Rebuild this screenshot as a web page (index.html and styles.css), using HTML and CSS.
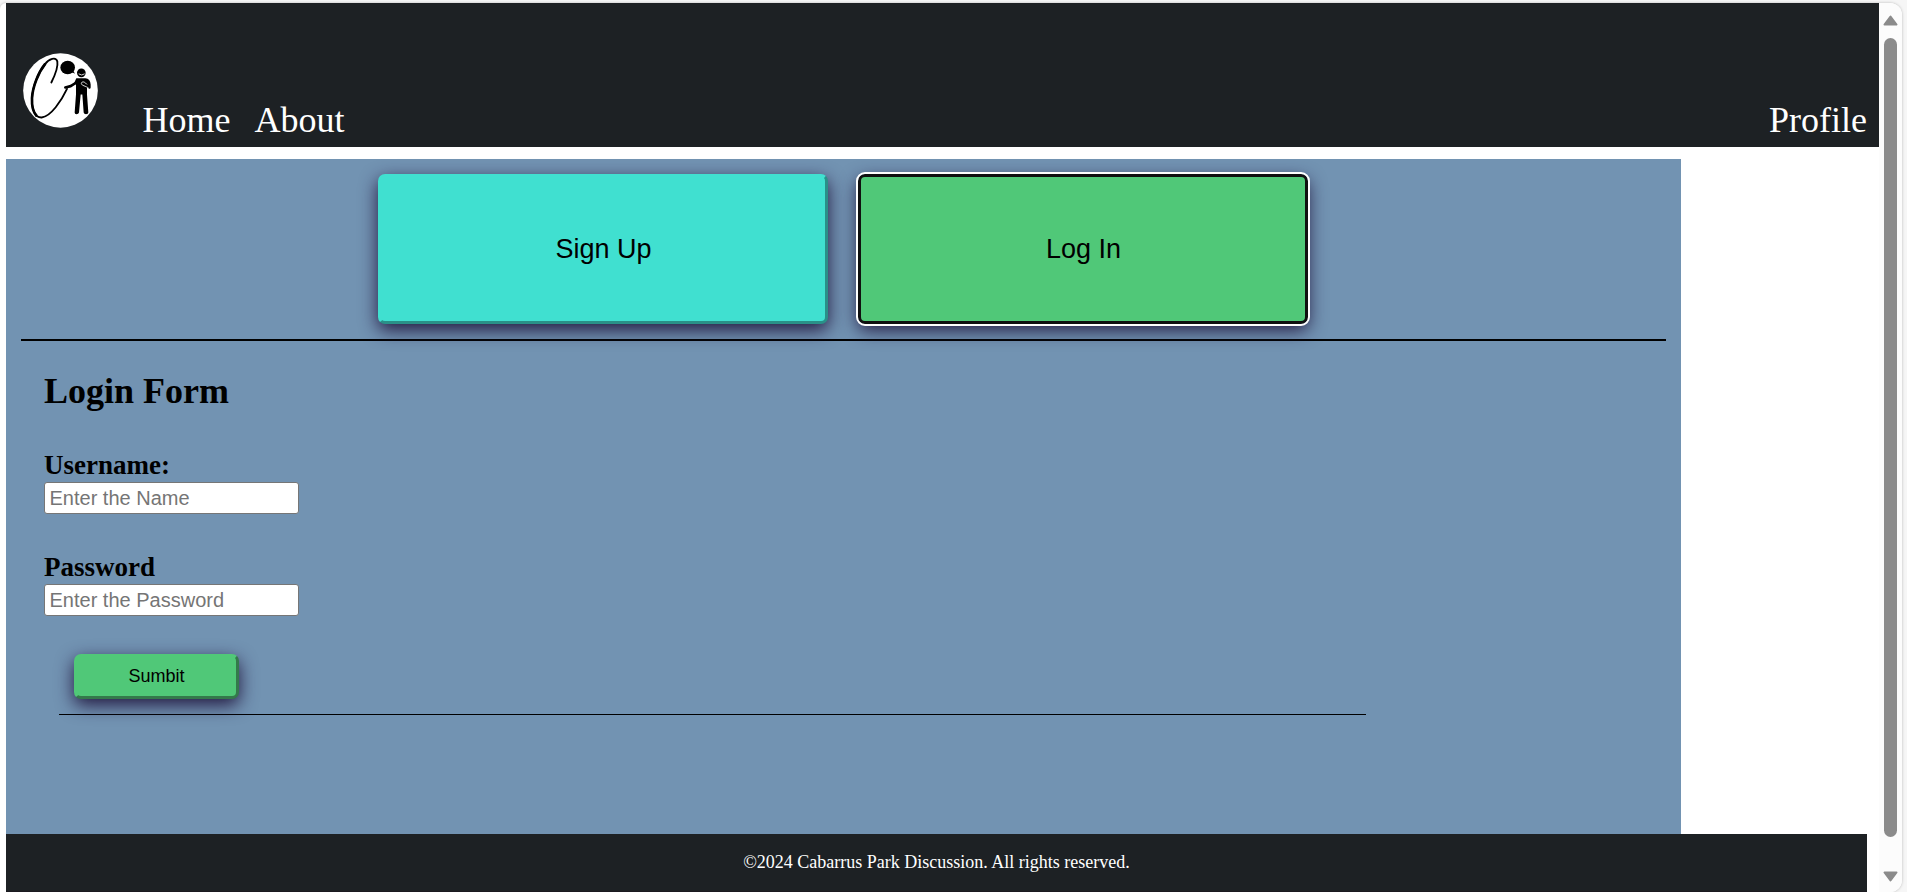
FILE: index.html
```html
<!DOCTYPE html>
<html lang="en">
<head>
<meta charset="utf-8">
<title>Cabarrus Park Discussion</title>
<link rel="stylesheet" href="styles.css">
</head>
<body>
<div class="window">
  <div class="page">
    <header class="header">
      <svg class="logo" viewBox="0 0 225 224" role="img" aria-label="Logo">
        <ellipse cx="112.500" cy="112" rx="112" ry="111.500" fill="#fff"/>
        <g fill="none" stroke="#000" stroke-linecap="round" stroke-linejoin="round">
          <path stroke-width="5.500" d="M85 88C96 66 106 42 103 25C99 10 78 16 66 33C46 58 29 100 27 135C25 168 36 194 56 193C84 190 115 143 132 107"/>
          <path stroke-width="8" d="M66 33C46 58 29 100 27 135C26 160 31 177 40 187"/>
          <path stroke-width="8" d="M127 103L143 99L165 85"/>
        </g>
        <ellipse cx="134" cy="43" rx="22" ry="20"/>
        <path d="M142 54L156 62L150 51Z"/>
        <circle cx="175" cy="59" r="13"/>
        <path d="M160 75H187Q202 76 203 94V103Q202 109 196 105L192 103V124L196 178Q196 183 189 183Q183 183 182 178L178 124H173L168 178Q167 183 160 183Q155 183 155 178L159 123V95L154 88Z"/>
        <path fill="none" stroke="#fff" stroke-width="2.500" d="M167 62Q176 69 185 62M192 94C184 84 176 84 175 91C176 98 188 98 197 105"/>
      </svg>
      <nav class="nav">
        <a class="nav-link">Home</a>
        <a class="nav-link">About</a>
      </nav>
      <a class="nav-link profile">Profile</a>
    </header>
    <main class="main">
      <div class="choices">
        <button class="button choice signup">Sign Up</button>
        <button class="button choice login">Log In</button>
      </div>
      <form class="form">
        <h2 class="title">Login Form</h2>
        <label class="label" for="user">Username:</label>
        <input class="input" id="user" type="text" placeholder="Enter the Name">
        <label class="label" for="pass">Password</label>
        <input class="input" id="pass" type="password" placeholder="Enter the Password">
        <div class="submit-row">
          <button class="button submit" type="button">Sumbit</button>
        </div>
      </form>
    </main>
    <footer class="footer">©2024 Cabarrus Park Discussion. All rights reserved.</footer>
  </div>
  <div class="scrollbar">
    <svg class="arrow" viewBox="0 0 15 11"><path d="M7.500 1.500L13.500 9.500H1.500Z"/></svg>
    <div class="thumb"></div>
    <svg class="arrow down" viewBox="0 0 15 11"><path d="M7.500 1.500L13.500 9.500H1.500Z"/></svg>
  </div>
</div>
</body>
</html>
```
FILE: styles.css
```css
* {
  box-sizing: border-box;
}

body {
  margin: 0;
  height: 892px;
  padding-top: 3px;
  overflow: hidden;
  background: #f6f6f6;
  font-family: "Liberation Serif", "Times New Roman", serif;
}

.window {
  display: flex;
  width: 1902px;
  height: 889px;
  overflow: hidden;
  border-radius: 6px 12px 12px 0;
  background: #fff;
  box-shadow: 0 0 3px rgba(0, 0, 0, 0.25);
}

.page {
  width: 1879px;
  padding-left: 6px;
}

.header {
  display: flex;
  align-items: flex-end;
  height: 144px;
  padding: 0 12px 0 17px;
  background: #1d2124;
}

.logo {
  width: 75px;
  height: 75px;
  margin-bottom: 19px;
}

.nav {
  display: flex;
  gap: 24px;
  margin-left: 44.5px;
}

.nav-link {
  margin-bottom: 6px;
  color: #fff;
  font-size: 36px;
  line-height: 41px;
}

.profile {
  margin-left: auto;
}

.main {
  width: 1675px;
  height: 675px;
  margin-top: 12px;
  padding: 15px;
  background: #7293b2;
}

.choices {
  display: flex;
  justify-content: center;
  gap: 30px;
  height: 167px;
  padding-right: 1px;
  border-bottom: 2px solid #000;
}

.button {
  border: 3px solid;
  border-radius: 7px;
  color: #000;
  font-family: "Liberation Sans", Arial, sans-serif;
  box-shadow: 0 6px 18px #221840;
}

.choice {
  width: 450px;
  height: 150px;
  padding: 0 0 0 1px;
  font-size: 27px;
}

.signup {
  background: #40e0d0;
  border-color: #40e0d0 #2a9088 #2a9088 #40e0d0;
}

.login {
  border-color: #101010;
  background: #50c878;
  outline: 2px solid #fff;
}

.form {
  padding: 30px 23px 0;
}

.title {
  margin: 0 0 38px;
  font-size: 36px;
  line-height: 41px;
}

.label {
  display: block;
  padding-bottom: 1px;
  font-size: 27px;
  font-weight: bold;
  line-height: 31px;
}

.input {
  display: block;
  width: 255px;
  height: 32px;
  margin: 0 0 38px;
  padding: 1px 4.5px;
  border: 1px solid #767676;
  border-radius: 3px;
  background: #fff;
  font: 20px "Liberation Sans", Arial, sans-serif;
}

.input::placeholder {
  color: #757575;
}

.submit-row {
  width: 1307px;
  height: 61px;
  margin-left: 15px;
  padding-left: 15px;
  border-bottom: 1px solid #000;
}

.submit {
  width: 165px;
  height: 45px;
  border-color: #50c878 #34794b #34794b #50c878;
  background: #50c878;
  font-size: 18px;
}

.footer {
  width: 1861px;
  height: 58px;
  padding-top: 18px;
  border-bottom: 1px solid #1b1a20;
  background: #1d2124;
  color: #fff;
  font-size: 18px;
  line-height: 21px;
  text-align: center;
}

.scrollbar {
  display: flex;
  flex-direction: column;
  align-items: center;
  width: 23px;
  padding-top: 12px;
  background: #fcfcfc;
}

.arrow {
  width: 15px;
  height: 11px;
  fill: #8b8b8b;
  stroke: #8b8b8b;
  stroke-width: 2;
  stroke-linejoin: round;
}

.down {
  transform: rotate(180deg);
}

.thumb {
  width: 13px;
  height: 799px;
  margin: 12px 0 34px;
  border-radius: 7px;
  background: #8b8b8b;
}
```
